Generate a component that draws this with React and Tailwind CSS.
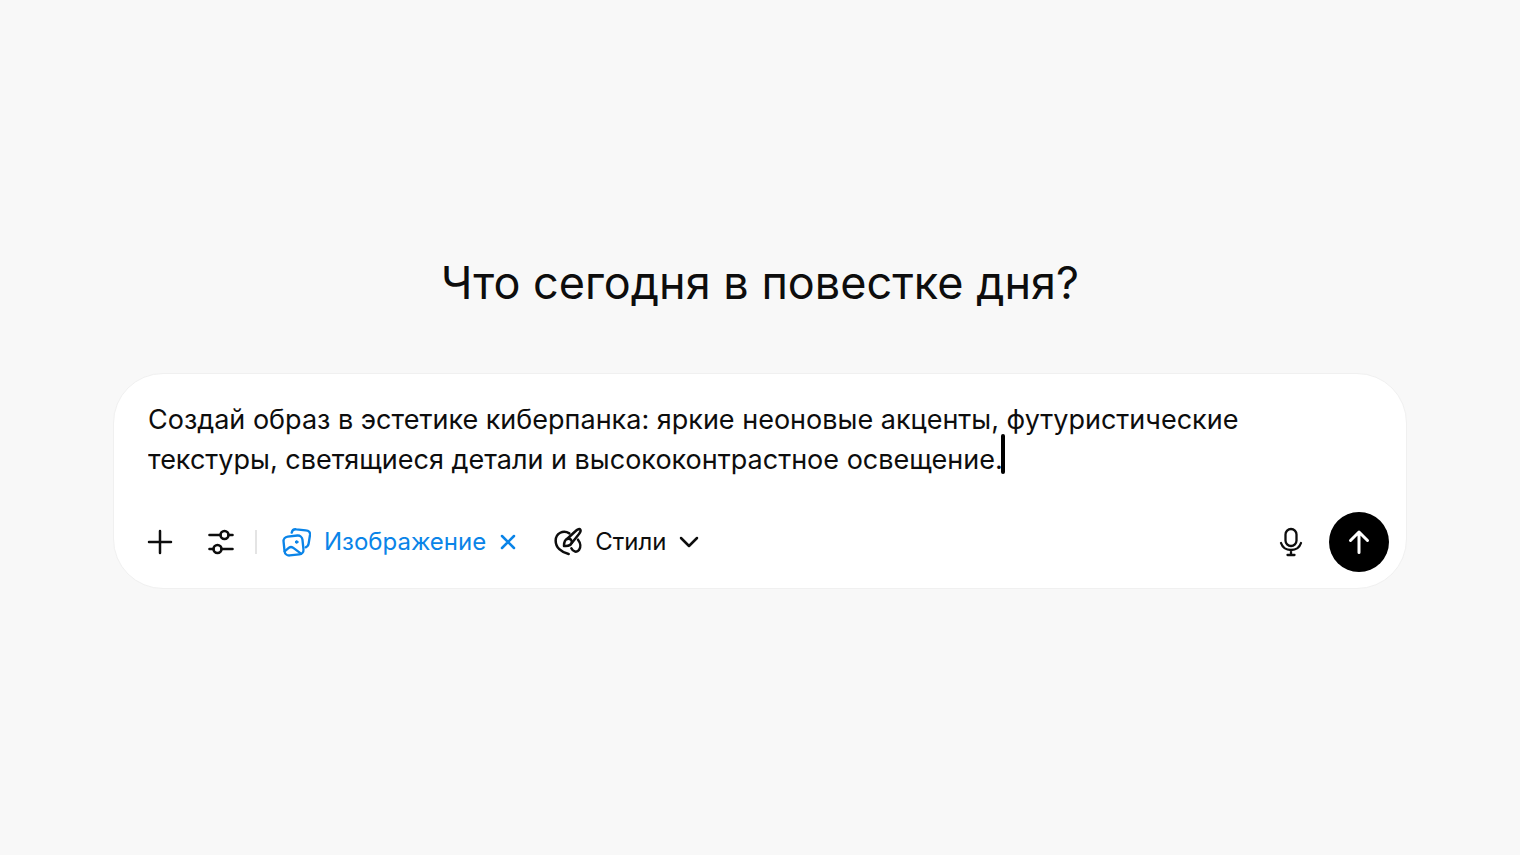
const prompt =
  "Создай образ в эстетике киберпанка: яркие неоновые акценты, футуристические текстуры, светящиеся детали и высококонтрастное освещение.";

const iconProps = {
  fill: "none",
  stroke: "currentColor",
  strokeLinecap: "round",
  strokeLinejoin: "round",
  "aria-hidden": true,
};

const PlusIcon = () => (
  <svg {...iconProps} viewBox="0 0 28 28" strokeWidth="2.5" className="size-7">
    <path d="M14 3v22M3 14h22" />
  </svg>
);

const SlidersIcon = () => (
  <svg {...iconProps} viewBox="0 0 28 28" strokeWidth="2.6" className="size-7">
    <path d="M2.500 7h11M21.500 7h4M2.500 21h4M14.500 21h11" />
    <circle cx="17.500" cy="7" r="4" />
    <circle cx="10.500" cy="21" r="4" />
  </svg>
);

const PicturesIcon = () => (
  <svg {...iconProps} viewBox="0 0 90 90" strokeWidth="7" className="size-[30px]">
    <rect x="9" y="27" width="57" height="57" rx="14" transform="rotate(-6 37 55)" />
    <path d="M11 73 24 62q6-4 12 0l24 18" />
    <circle cx="47" cy="45" r="4" fill="currentColor" strokeWidth="3" />
    <path d="M32 17c2-9 7-11 14-10l28 3c10 1 14 6 13 14l-4 25c-1 7-4 10-9 12" />
  </svg>
);

const PaletteIcon = () => (
  <svg {...iconProps} viewBox="0 0 90 90" strokeWidth="7.500" className="size-[30px]">
    <path d="M47 81C24 76 8 61 8 41 8 18 31 8 49 19" />
    <path d="M75 38c8 10 9 23 3 31-6 8-18 6-23-5" />
    <path d="M42 36 68 12c6-6 12-7 14-4s0 8-4 13L57 47" />
    <path d="M33 57c0-9 2-20 11-22 8-1 14 5 12 12-2 8-13 11-23 10Z" />
  </svg>
);

const CloseIcon = () => (
  <svg {...iconProps} viewBox="0 0 18 18" strokeWidth="2.500" className="size-[18px]">
    <path d="m3 3 12 12M15 3 3 15" />
  </svg>
);

const ChevronIcon = () => (
  <svg {...iconProps} viewBox="0 0 20 20" strokeWidth="2.500" className="size-5">
    <path d="m2 6 8 8 8-8" />
  </svg>
);

const MicIcon = () => (
  <svg {...iconProps} viewBox="0 0 28 30" strokeWidth="2.300" className="h-[30px] w-7">
    <rect x="8.500" y="2" width="11" height="17" rx="5.500" />
    <path d="M4 16c1.500 4.500 5 7 10 7s8.500-2.500 10-7M14 23v5M10.500 28h7" />
  </svg>
);

const ArrowUpIcon = () => (
  <svg {...iconProps} viewBox="0 0 28 28" strokeWidth="3" className="size-7">
    <path d="M14 24.500V4M5.500 12.500 14 4l8.500 8.500" />
  </svg>
);

const Composer = () => (
  <form
    onSubmit={(e) => e.preventDefault()}
    className="w-full rounded-[50px] border border-[#f0f0f0] bg-white pt-[26px] pr-[17px] pb-4 pl-[34px]"
  >
    <div className="relative">
      <textarea
        id="prompt"
        aria-label="Запрос"
        rows={2}
        defaultValue={prompt}
        className="block w-full resize-none overflow-hidden pr-20 text-[27px] leading-10 caret-transparent outline-none"
      />
      {/* thick caret after the last word */}
      <span className="absolute top-[34px] left-[853px] h-10 w-1 rounded-full bg-black" />
    </div>

    <div className="mt-8 flex items-center justify-between">
      <div className="flex items-center text-2xl">
        <button type="button" aria-label="Добавить" className="-ml-0.5">
          <PlusIcon />
        </button>
        <button type="button" aria-label="Инструменты" className="ml-[33px]">
          <SlidersIcon />
        </button>
        <span className="ml-5 h-6 w-0.5 bg-[#e4e4e4]" />
        <button type="button" className="ml-6 flex items-center gap-[13px] text-[#0a84e8]">
          <PicturesIcon />
          Изображение
          <CloseIcon />
        </button>
        <button type="button" className="ml-9 flex items-center gap-3">
          <PaletteIcon />
          Стили
          <ChevronIcon />
        </button>
      </div>
      <div className="flex items-center gap-6">
        <button type="button" aria-label="Диктовка">
          <MicIcon />
        </button>
        <button
          type="submit"
          aria-label="Отправить"
          className="flex size-[60px] items-center justify-center rounded-full bg-black text-white"
        >
          <ArrowUpIcon />
        </button>
      </div>
    </div>
  </form>
);

const App = () => (
  <main className="flex min-h-screen flex-col items-center justify-center gap-[62px] bg-[#f8f8f8] px-[113px] pb-3 font-['Inter',sans-serif] text-[#0d0d0d]">
    <h1 className="text-center text-[45px] leading-[56px]">Что сегодня в повестке дня?</h1>
    <Composer />
  </main>
);

export default App;
